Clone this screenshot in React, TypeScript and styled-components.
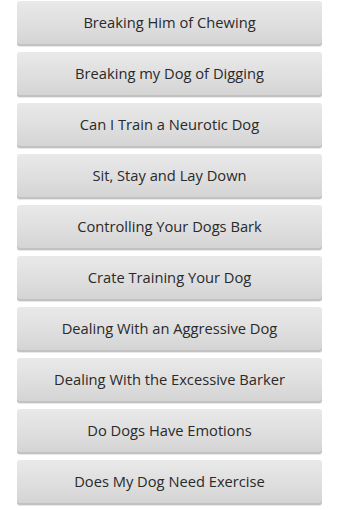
import React from 'react'
import styled, { createGlobalStyle } from 'styled-components'

const topics = [
  'Breaking Him of Chewing',
  'Breaking my Dog of Digging',
  'Can I Train a Neurotic Dog',
  'Sit, Stay and Lay Down',
  'Controlling Your Dogs Bark',
  'Crate Training Your Dog',
  'Dealing With an Aggressive Dog',
  'Dealing With the Excessive Barker',
  'Do Dogs Have Emotions',
  'Does My Dog Need Exercise',
]

const GlobalStyle = createGlobalStyle`
  html, body {
    margin: 0;
    padding: 0;
    background: #ffffff;
  }
`

const Screen = styled.div`
  width: 340px;
  height: 510px;
  overflow: hidden;
  background: #ffffff;
  padding: 1px 18px 0 17px;
  box-sizing: border-box;
  display: flex;
  flex-direction: column;
  gap: 6px;
`

const TopicButton = styled.button`
  height: 45px;
  width: 100%;
  flex-shrink: 0;
  margin: 0;
  padding: 0 0 3px;
  border: none;
  border-radius: 3px;
  background: linear-gradient(to bottom, #e9e9e9 0%, #dedede 55%, #d3d3d3 100%);
  box-shadow: inset 0 -2px 0 #c2c2c2, 0 1px 0 #e8e8e8;
  font-family: 'Open Sans', 'Noto Sans', 'DejaVu Sans', sans-serif;
  font-size: 14.7px;
  color: #2a2a2a;
  text-align: center;
`

export default function App() {
  return (
    <>
      <GlobalStyle />
      <Screen>
        {topics.map((t) => (
          <TopicButton key={t}>{t}</TopicButton>
        ))}
      </Screen>
    </>
  )
}
